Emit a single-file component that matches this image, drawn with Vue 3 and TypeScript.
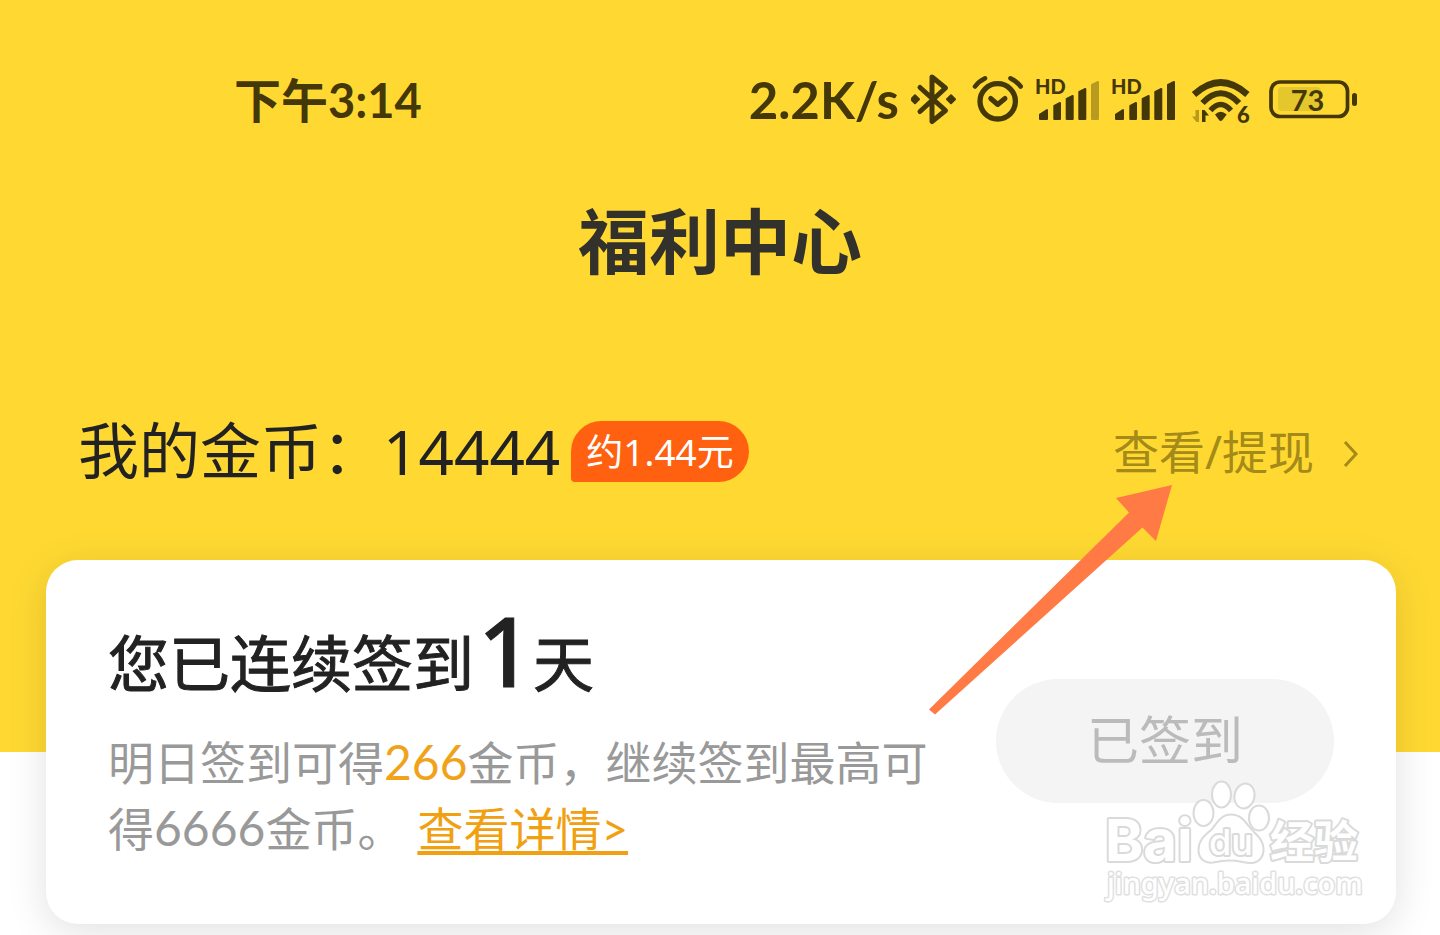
<script setup lang="ts">
interface Signal {
  id: string
  weakLast: boolean
}

const signals: Signal[] = [
  { id: 'sim1', weakLast: true },
  { id: 'sim2', weakLast: false },
]

const coins = 14444
const streakDays = 1
const tomorrowReward = 266
const maxReward = 6666
</script>

<template>
  <div class="page">
    <header class="hero">
      <div class="status">
        <span class="clock">下午3:14</span>
        <div class="indicators">
          <span class="speed">2.2K/s</span>
          <svg width="47" height="56" viewBox="911 72 47 56" aria-label="蓝牙">
            <path d="M920 87.500L945.500 110.500L932 121.500V77L945.500 88L920 111.500" class="line" stroke-width="5" />
            <path d="M911 99.300l4-4 4 4-4 4zM947 99.300l4-4 4 4-4 4z" class="ink soft" />
          </svg>
          <svg width="54" height="56" viewBox="970 72 54 56" aria-label="闹钟">
            <circle cx="997.700" cy="101.300" r="17.700" class="line" stroke-width="5.300" />
            <path d="M990.700 98.500l7 6 7.300-6" class="line" stroke-width="5" />
            <path d="M975 86.500Q979 81 985 78.300M1010.500 78.300Q1016.500 81 1020.700 86.500" class="line" stroke-width="4.600" />
          </svg>
          <svg v-for="s in signals" :key="s.id" width="64" height="56" viewBox="1036 72 64 56" aria-label="信号">
            <text x="1035" y="94" class="tiny heavy" font-size="20">HD</text>
            <path d="M1040 114.500l7-4.500v9h-7z" class="ink soft" />
            <path d="M1054.300 106l5.700-3v16h-5.700z" class="ink soft" />
            <path d="M1066.700 99l6-3v23h-6z" class="ink soft" />
            <path d="M1079.300 92l6-3v30h-6z" class="ink soft" />
            <path d="M1092 85l6-3v37h-6z" class="ink soft" :class="{ weak: s.weakLast }" />
          </svg>
          <svg width="66" height="56" viewBox="1188 72 66 56" aria-label="无线网络">
            <path d="M1194 94.500Q1220.700 70.500 1247.400 94.500" class="line flat" stroke-width="6.500" />
            <path d="M1202.500 103Q1220.700 83.500 1239 103" class="line flat" stroke-width="6" />
            <path d="M1210.500 110.500Q1220.700 98.500 1231 110.500" class="line flat" stroke-width="5.500" />
            <path d="M1215 114.500Q1220.700 109 1226.700 114.500L1222.500 120Q1220.700 121.800 1219 120z" class="ink" />
            <path d="M1199 110v12h-2.500l-4.500-5.500h3.500V110z" class="ink weak" />
            <path d="M1202 122v-12h2.500l4.500 5.500h-3.500V122z" class="ink" />
            <text x="1237" y="122.500" class="tiny heavy" font-size="22">6</text>
          </svg>
          <svg width="92" height="56" viewBox="1266 72 92 56" aria-label="电量">
            <rect x="1278" y="87" width="43" height="24" rx="4" fill="#e3c72d" />
            <rect x="1271" y="82" width="76.500" height="34.500" rx="9" class="line" stroke-width="3.700" />
            <rect x="1352" y="93" width="5" height="13" rx="2.500" class="ink" />
            <text x="1307.500" y="111" class="tiny" font-size="29" text-anchor="middle">73</text>
          </svg>
        </div>
      </div>

      <h1 class="title">福利中心</h1>

      <div class="wallet">
        <span class="wallet-label">我的金币：</span>
        <span class="wallet-count">{{ coins }}</span>
        <span class="badge">约1.44元</span>
        <a class="withdraw" href="#withdraw">
          查看/提现
          <svg width="18" height="32" viewBox="0 0 18 32" aria-hidden="true">
            <path d="M3 7l11 12L3 31" fill="none" stroke="currentColor" stroke-width="3" />
          </svg>
        </a>
      </div>
    </header>

    <main class="content">
      <section class="card">
        <div class="card-text">
          <h2 class="streak">您已连续签到<span class="streak-days">{{ streakDays }}</span>天</h2>
          <p class="desc">
            明日签到可得<span class="amount reward">{{ tomorrowReward }}</span>金币，继续签到最高可得<span class="amount">{{ maxReward }}</span>金币。<a class="detail" href="#detail">查看详情&gt;</a>
          </p>
        </div>
        <button class="signed" type="button">已签到</button>

        <svg class="watermark" width="270" height="136" viewBox="1100 774 270 136" aria-label="Baidu 经验">
          <g class="mark">
            <text x="1105" y="861" class="mark-bai" font-size="58">Bai</text>
            <ellipse cx="1203.500" cy="813" rx="10" ry="13" />
            <ellipse cx="1221.500" cy="794.500" rx="9.500" ry="13" />
            <ellipse cx="1244.500" cy="796" rx="10" ry="12.500" transform="rotate(12 1244.500 796)" />
            <ellipse cx="1259" cy="818" rx="10" ry="12.500" />
            <path d="M1231 814.500C1221 814.500 1217 823 1212 829C1206 835 1198.500 839 1198.500 850C1198.500 859 1205 863.500 1213 862.500C1220 861 1225 860 1231 860.500C1239 860.500 1245 863.500 1252 863C1260 862 1264 856 1263.500 848C1262.500 838 1255 834 1249.500 827C1244 820 1240 814.500 1231 814.500Z" />
            <text x="1209" y="855" class="mark-du" font-size="36">du</text>
            <text x="1270" y="858" class="mark-cn" font-size="44">经验</text>
            <text x="1107" y="894" class="mark-url" font-size="29">jingyan.baidu.com</text>
          </g>
        </svg>
      </section>
    </main>

    <svg class="pointer" width="246" height="232" viewBox="928 484 246 232" aria-hidden="true">
      <path d="M1172 485L1116 498L1129 512.500L929 709.500L935 714.500L1142.500 527.500L1156 541Z" fill="#ff7a45" />
    </svg>
  </div>
</template>

<style>
body {
  margin: 0;
  background: #fff;
}
</style>

<style scoped>
.page {
  position: relative;
  min-height: 100vh;
  overflow: hidden;
  background: #fff;
  color: #222;
  font-family: "Noto Sans", "Noto Sans CJK SC", sans-serif;
}

.hero {
  padding: 72px 78px 253px;
  background: #ffd932;
}

.status {
  display: flex;
  align-items: center;
  justify-content: space-between;
  height: 56px;
  padding: 0 4px 0 156px;
  color: #443708;
  font-family: Lato, "Noto Sans CJK SC", sans-serif;
  font-weight: 700;
  line-height: 56px;
}

.clock {
  font-size: 47px;
}

.speed {
  font-size: 51px;
}

.indicators {
  display: flex;
  align-items: center;
  gap: 12px;
}

.indicators svg {
  display: block;
}

.line {
  fill: none;
  stroke: #443708;
  stroke-linecap: round;
  stroke-linejoin: round;
}

.flat {
  stroke-linecap: butt;
}

.ink {
  fill: #443708;
}

.soft {
  stroke: #443708;
  stroke-width: 2;
  stroke-linejoin: round;
}

.weak {
  fill: #b89a20;
}

.soft.weak {
  stroke: #b89a20;
}

.tiny {
  fill: #443708;
  font-family: Lato, sans-serif;
  font-weight: 700;
}

.heavy {
  font-weight: 900;
}

.title {
  margin: 65px 0 0;
  color: #33312b;
  font-size: 71px;
  font-weight: 700;
  line-height: 96px;
  text-align: center;
}

.wallet {
  display: flex;
  align-items: center;
  height: 96px;
  margin-top: 114px;
  padding-right: 2px;
  line-height: 96px;
}

.wallet-label {
  font-size: 61px;
}

.wallet-count {
  font-size: 62px;
}

.badge {
  margin-left: 11px;
  padding: 0 15px;
  border-radius: 31px 31px 31px 4px;
  background: #ff6110;
  color: #fff;
  font-size: 37px;
  line-height: 61px;
}

.withdraw {
  display: flex;
  align-items: center;
  gap: 28px;
  margin-left: auto;
  color: #a48a18;
  font-size: 46px;
  line-height: 92px;
  text-decoration: none;
}

.content {
  padding: 0 44px 11px 46px;
}

.card {
  position: relative;
  display: flex;
  align-items: center;
  justify-content: space-between;
  margin-top: -192px;
  padding: 60px 62px 62px;
  border-radius: 32px;
  background: #fff;
  box-shadow: 0 8px 40px rgba(0, 0, 0, 0.12);
}

.card-text {
  max-width: 826px;
}

.streak {
  margin: 0;
  font-size: 61px;
  font-weight: 400;
  line-height: 88px;
  -webkit-text-stroke: 1px #222;
}

.streak-days {
  margin-left: 4px;
  font-size: 96px;
  font-weight: 500;
  line-height: 1px;
}

.desc {
  margin: 22px 0 0;
  color: #999;
  font-family: Lato, "Noto Sans CJK SC", sans-serif;
  font-size: 46px;
  line-height: 66px;
}

.amount {
  font-size: 48px;
  line-height: 1px;
}

.reward {
  color: #f0a31a;
}

.detail {
  margin-left: 14px;
  color: #f0a010;
  text-decoration: underline;
  text-decoration-thickness: 4px;
  text-underline-offset: 5px;
}

.signed {
  flex: none;
  width: 338px;
  height: 124px;
  padding: 0 0 8px;
  border: 0;
  border-radius: 62px;
  background: #f4f4f4;
  color: #bbb;
  font-family: "Noto Sans CJK SC", sans-serif;
  font-size: 52px;
}

.watermark {
  position: absolute;
  right: 26px;
  bottom: 14px;
  pointer-events: none;
}

.mark {
  fill: #fff;
  stroke: #dadada;
  stroke-width: 2;
  stroke-linejoin: round;
}

.mark text {
  stroke-width: 4;
  paint-order: stroke;
}

.mark-bai {
  font-family: Inter, sans-serif;
  font-weight: 700;
}

.mark-du {
  font-family: Inter, sans-serif;
  font-weight: 500;
}

.mark-cn {
  font-family: "Noto Sans CJK SC", sans-serif;
  font-weight: 700;
}

.mark .mark-url {
  font-family: "Noto Sans", sans-serif;
  font-weight: 500;
  stroke: #e0e0e0;
  stroke-width: 3;
}

.pointer {
  position: absolute;
  top: 484px;
  right: 266px;
  pointer-events: none;
}
</style>
